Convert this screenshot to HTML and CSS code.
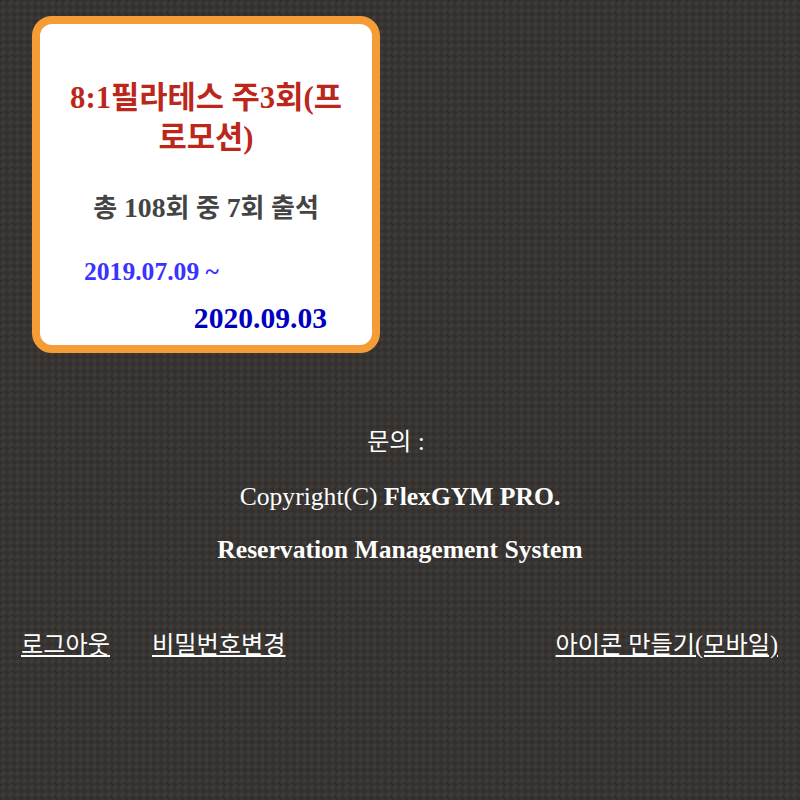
FILE: index.html
```html
<!DOCTYPE html>
<html lang="ko">
<head>
<meta charset="utf-8">
<title>FlexGYM PRO</title>
<link rel="stylesheet" href="styles.css">
</head>
<body>
<div class="grid">
  <section class="card">
    <h2 class="title">8:1필라테스 주3회(프로모션)</h2>
    <h3 class="count"><span class="ko">총</span> 108<span class="ko">회 중</span> 7<span class="ko">회 출석</span></h3>
    <p class="start">2019.07.09 ~</p>
    <p class="end">2020.09.03</p>
  </section>
</div>
<footer class="info">
  <p class="contact"><span class="ko">문의</span> :</p>
  <p>Copyright(C) <b>FlexGYM PRO.</b></p>
  <p><b>Reservation Management System</b></p>
</footer>
<nav class="links">
  <a href="#">로그아웃</a>
  <a href="#">비밀번호변경</a>
  <a href="#" class="push">아이콘 만들기(모바일)</a>
</nav>
</body>
</html>
```
FILE: styles.css
```css
html, body { margin: 0; height: 100%; }
body {
  font-family: "Liberation Serif", "Noto Sans CJK KR", serif;
  color: #fff;
  background-color: #363330;
  background-image:
    radial-gradient(circle at 3.5px 3.5px, #3e3b38 0 1.5px, transparent 2.5px),
    radial-gradient(circle at 0 0, #2f2c2a 0 1.5px, transparent 2.5px),
    radial-gradient(circle at 7px 7px, #2f2c2a 0 1.5px, transparent 2.5px);
  background-size: 7px 7px;
  overflow: hidden;
}
.grid { padding: 16px 0 0 32px; }
.card {
  box-sizing: border-box;
  width: 348px;
  height: 337px;
  padding: 54px 24px 0;
  background: #fff;
  border: 8px solid #f49c35;
  border-radius: 20px;
}
.ko { font-size: 26px; }
.title { margin: 0; font-size: 30.7px; line-height: 40px; font-weight: 700; color: #bc271b; text-align: center; }
.count { margin: 34px 0 0; font-size: 27.7px; line-height: 32px; font-weight: 700; color: #444; text-align: center; }
.start { margin: 31px 0 0 20px; font-size: 25.6px; line-height: 32px; font-weight: 700; color: #3a33ff; }
.end { margin: 14px 0 0; font-size: 29.6px; line-height: 32px; font-weight: 700; color: #0000c0; text-align: right; padding-right: 21px; }
.info { margin-top: 73px; text-align: center; font-size: 25.6px; line-height: 32px; }
.info p { margin: 0 0 21px; }
.info .contact { margin-bottom: 23px; padding-right: 8px; }
.info .ko { font-size: 24px; }
.links { display: flex; gap: 42px; padding: 42px 22px 0 21px; font-size: 24.2px; line-height: 32px; }
.links a { color: #fff; }
.links .push { margin-left: auto; }
```
